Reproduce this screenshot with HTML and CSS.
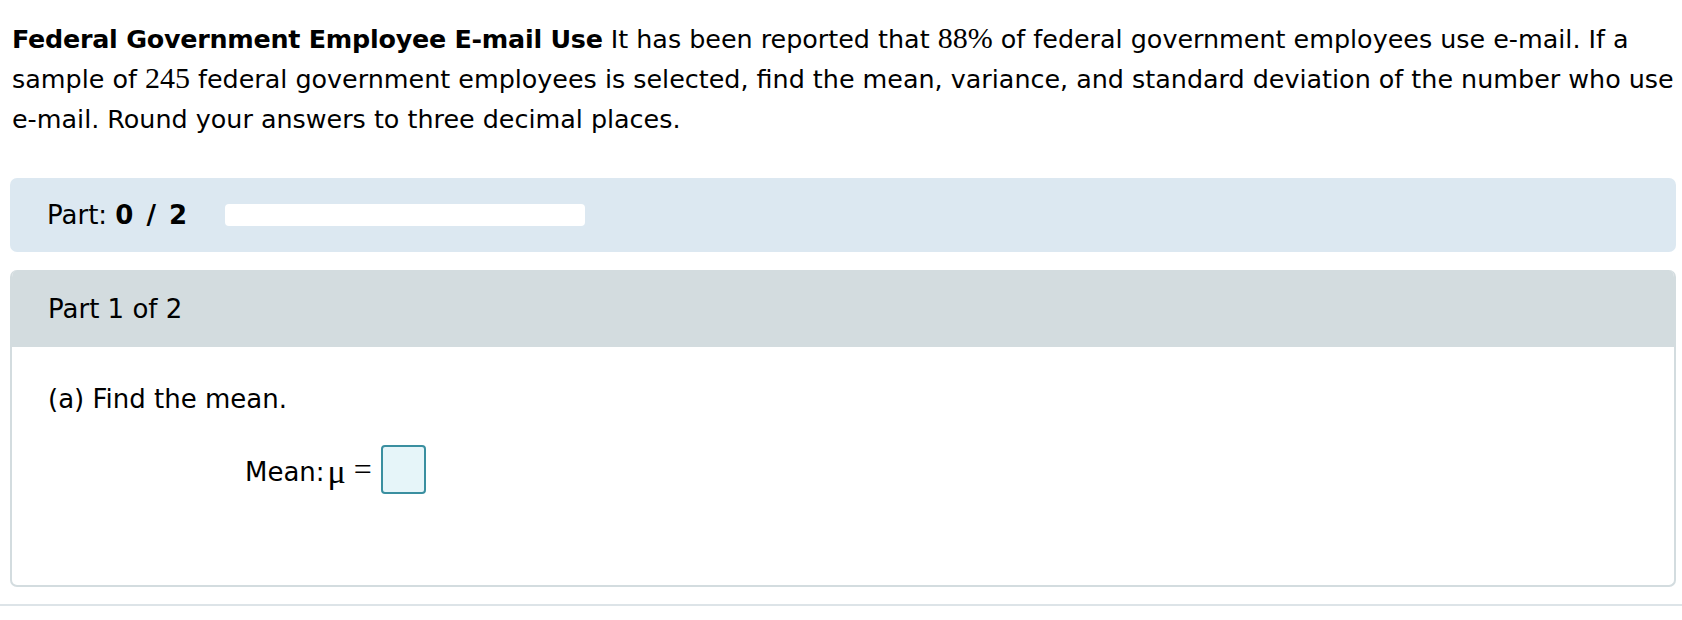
FILE: index.html
```html
<!DOCTYPE html>
<html lang="en">
<head>
<meta charset="utf-8">
<title>Federal Government Employee E-mail Use</title>
<link rel="stylesheet" href="styles.css">
</head>
<body>
<div class="page">
  <p class="problem"><b>Federal Government Employee E-mail Use</b> It has been reported that <span class="math">88%</span> of federal government employees use e-mail. If a<br>sample of <span class="math">245</span> federal government employees is selected, find the mean, variance, and standard deviation of the number who use<br>e-mail. Round your answers to three decimal places.</p>

  <div class="progress-box">
    <span class="part-label">Part: <b>0 / 2</b></span>
    <div class="progress-bar"></div>
  </div>

  <div class="part-card">
    <div class="part-head">Part 1 of 2</div>
    <div class="part-body">
      <div class="question">(a) Find the mean.</div>
      <div class="answer-row">
        <span class="answer-label">Mean:</span>
        <span class="mu">μ</span>
        <span class="eq">=</span>
        <span class="answer-input"></span>
      </div>
    </div>
  </div>
</div>
<div class="bottom-rule"></div>
</body>
</html>
```

FILE: styles.css
```css
html, body {
  margin: 0;
  padding: 0;
  background: #ffffff;
}

body {
  font-family: "DejaVu Sans", Verdana, sans-serif;
  font-size: 26px;
  color: #000000;
}

.page {
  padding: 0 6px 0 10px;
}

.problem {
  margin: 0;
  padding: 19px 0 0 2px;
  font-size: 25.4px;
  line-height: 40px;
  white-space: nowrap;
}

.problem b {
  font-weight: bold;
  letter-spacing: -0.25px;
}

.math {
  font-family: "Liberation Serif", "Times New Roman", serif;
  font-size: 30px;
  line-height: 30px;
}

.progress-box {
  margin-top: 39px;
  height: 74px;
  background: #dce8f1;
  border-radius: 7px;
  display: flex;
  align-items: center;
  padding-left: 37px;
  gap: 36px;
}

.part-label b {
  font-weight: bold;
  letter-spacing: 2px;
}

.progress-bar {
  width: 360px;
  height: 22px;
  background: #ffffff;
  border-radius: 4px;
}

.part-card {
  margin-top: 18px;
  border: 2px solid #d3dcdf;
  border-top: none;
  border-radius: 7px;
  overflow: hidden;
}

.part-head {
  height: 77px;
  background: #d3dcdf;
  display: flex;
  align-items: center;
  margin: 0 -2px;
  padding-left: 38px;
}

.part-body {
  height: 238px;
  padding: 36px 0 0 36px;
  box-sizing: border-box;
}

.question {
  line-height: 32px;
}

.answer-row {
  display: flex;
  align-items: center;
  margin-top: 30px;
  padding-left: 197px;
}

.answer-label {
  padding-top: 4px;
}

.mu {
  font-family: "Liberation Serif", "Times New Roman", serif;
  font-size: 34px;
  margin-left: 3px;
  padding-top: 4px;
}

.eq {
  font-family: "Liberation Serif", "Times New Roman", serif;
  font-size: 32px;
  margin-left: 8px;
}

.answer-input {
  display: inline-block;
  width: 41px;
  height: 45px;
  margin-left: 9px;
  background: #e6f5f9;
  border: 2px solid #3a8fa0;
  border-radius: 4px;
}

.bottom-rule {
  margin-top: 17px;
  height: 2px;
  background: #dde4e8;
}
```
